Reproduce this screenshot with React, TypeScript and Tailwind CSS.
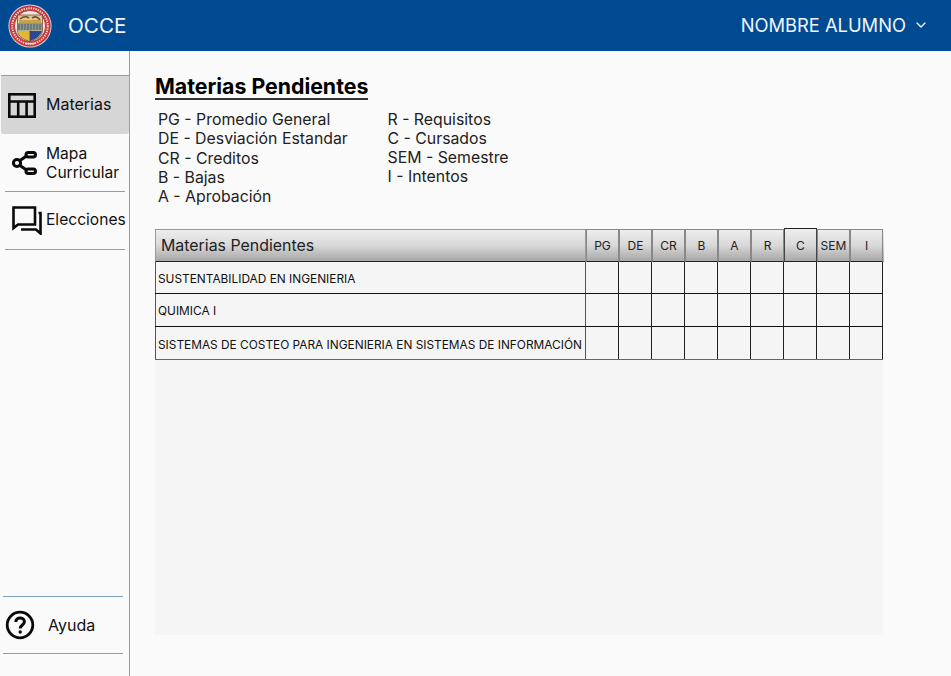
import { ChevronDown } from "lucide-react";

const font = "font-['Inter','Liberation_Sans',sans-serif]";
const columns = ["PG", "DE", "CR", "B", "A", "R", "C", "SEM", "I"];
const subjects = [
  { name: "SUSTENTABILIDAD EN INGENIERIA", row: "h-[32px] border-b border-[#111]", cell: "pt-[4px]" },
  { name: "QUIMICA I", row: "h-[33px] border-b border-[#111]", cell: "pt-[4px]" },
  { name: "SISTEMAS DE COSTEO PARA INGENIERIA EN SISTEMAS DE INFORMACIÓN", row: "h-[33px] border-b border-[#666]", cell: "pt-[5px]" },
];
const legendLeft = [
  "PG - Promedio General",
  "DE - Desviación Estandar",
  "CR - Creditos",
  "B - Bajas",
  "A - Aprobación",
];
const legendRight = ["R - Requisitos", "C - Cursados", "SEM - Semestre", "I - Intentos"];

function Logo() {
  return (
    <svg width="44" height="44" viewBox="0 0 44 44">
      <circle cx="22" cy="22" r="21.6" fill="#d9d3cf" />
      <circle cx="22" cy="22" r="20.6" fill="#c8323a" />
      <circle cx="22" cy="22" r="17.8" fill="none" stroke="#f4dcd0" strokeWidth="2" strokeDasharray="1.4 1" />
      <circle cx="22" cy="22" r="15.6" fill="#efe6d4" stroke="#a83a3e" strokeWidth="0.8" />
      <path d="M9.5 11 H34.5 V27 Q34 34 22 37.5 Q10 34 9.5 27 Z" fill="#dcc998" stroke="#6d3a30" strokeWidth="0.7" />
      <path d="M12 15 Q17 11 21 14 M24 14 Q29 11 32 16" fill="none" stroke="#7a4a2c" strokeWidth="1.6" />
      <rect x="11" y="16" width="22" height="3" fill="#c7a24a" />
      <rect x="10" y="19" width="24" height="7.5" fill="#8d9a94" />
      <path d="M10 21 H34 M10 23 H34 M10 25 H34" stroke="#38434c" strokeWidth="0.7" strokeDasharray="2 1" />
      <path d="M10 27 H22 V37 Q12 34 10 27 Z" fill="#e2b72f" />
      <path d="M22 27 H34 Q32 34 22 37 Z" fill="#2a4a96" />
      <path d="M22 26.5 V37.5" stroke="#5a2a2a" strokeWidth="0.7" />
      <path d="M17 39.6 H27" stroke="#f4dcd0" strokeWidth="1.4" />
    </svg>
  );
}

function TableIcon() {
  return (
    <svg className="shrink-0" width="28" height="25" viewBox="0 0 28 25" fill="none" stroke="#0a0a0a" strokeWidth="2.6">
      <rect x="1.3" y="1.3" width="25.4" height="22.4" />
      <path d="M1.3 8.5 H26.7 M10.2 8.5 V23.7 M18.6 8.5 V23.7" />
    </svg>
  );
}

function MapIcon() {
  return (
    <svg className="shrink-0" width="25" height="24" viewBox="0 0 25 24" fill="none" stroke="#0a0a0a" strokeWidth="3">
      <circle cx="5" cy="12" r="3.6" />
      <rect x="14" y="1.5" width="9.5" height="4.6" rx="2.3" />
      <rect x="14" y="17.9" width="9.5" height="4.6" rx="2.3" />
      <path d="M8 9.5 L14.5 5 M8 14.5 L14.5 19" />
    </svg>
  );
}

function ChatIcon() {
  return (
    <svg className="shrink-0" width="30" height="29" viewBox="0 0 30 29" fill="none" stroke="#0a0a0a" strokeWidth="2.6">
      <path d="M1.5 1.5 H23 V18.5 H6 L1.5 22 Z" />
      <path d="M26.5 7 H28.5 V27.5 L24 23.5 H9" />
    </svg>
  );
}

function HelpIcon() {
  return (
    <svg className="shrink-0" width="30" height="30" viewBox="0 0 30 30" fill="none" stroke="#0a0a0a" strokeWidth="2.8">
      <circle cx="15" cy="15" r="12.8" />
      <path d="M10.8 12 C10.8 6.6 19.4 6.8 19.4 11.8 C19.4 15 15.2 15 15.2 18.4" strokeWidth="3" />
      <circle cx="15.2" cy="22" r="1.7" fill="#0a0a0a" stroke="none" />
    </svg>
  );
}

export default function App() {
  return (
    <div className={`${font} flex h-[676px] w-[951px] flex-col overflow-hidden bg-[#fafafa] text-[#111]`}>
      {/* Header */}
      <header className="flex h-[51px] shrink-0 items-center justify-between bg-[#004a92] pl-[8px] pr-[22px] text-[#eef5fb]">
        <div className="flex items-center gap-[16px]">
          <Logo />
          <span className="text-[20.7px]">OCCE</span>
        </div>
        <div className="flex items-center gap-[7px]">
          <span className="text-[18.33px]">NOMBRE ALUMNO</span>
          <ChevronDown className="size-[16px]" strokeWidth={2} />
        </div>
      </header>

      <div className="flex min-h-0 flex-1">
        {/* Sidebar */}
        <aside className="flex w-[130px] shrink-0 flex-col border-r border-[#7fa3c0] pt-[24px] pb-[21px] pl-[1px] text-[16px]">
          <div className="flex h-[59px] items-center gap-[10px] rounded-b-[3px] border-t border-[#7fa3c0] bg-[#d6d6d6] pl-[7px]">
            <TableIcon />
            <span className="mb-[2px]">Materias</span>
          </div>
          <div className="mx-[4px] flex h-[58px] items-center gap-[9px] border-b border-[#7fa3c0] pl-[7px]">
            <MapIcon />
            <span className="text-[15.6px] leading-[19px]">Mapa<br />Curricular</span>
          </div>
          <div className="mx-[4px] flex h-[58px] items-center gap-[4px] border-b border-[#7fa3c0] pl-[7px]">
            <ChatIcon />
            <span className="mb-[2px] text-[15.6px] whitespace-nowrap">Elecciones</span>
          </div>
          <div className="mt-auto mb-[1px] mr-[6px] ml-[2px] flex h-[58px] items-center gap-[13px] border-y border-[#7fa3c0] pl-[2px]">
            <HelpIcon />
            <span>Ayuda</span>
          </div>
        </aside>

        {/* Content */}
        <main className="min-w-0 flex-1 pt-[23px] pl-[25px]">
          <h1 className="w-fit border-b-2 border-[#333] text-[21.3px] leading-[24px] font-bold text-black">Materias Pendientes</h1>
          <div className="mt-[10px] flex pl-[3px] text-[15.84px] text-[#222]">
            <ul className="w-[229.5px] leading-[19.25px]">
              {legendLeft.map((item) => (
                <li key={item}>{item}</li>
              ))}
            </ul>
            <ul className="leading-[19px]">
              {legendRight.map((item) => (
                <li key={item}>{item}</li>
              ))}
            </ul>
          </div>

          {/* Table */}
          <div className="mt-[23px] h-[406px] w-[728px] bg-[#f5f5f5]">
            <div className="flex h-[33px] w-[729px] bg-gradient-to-b from-[#efefef] via-[#d8d8d8] to-[#a4a4a4] text-[#222]">
              <div className="flex w-[431px] items-center border border-b-[#222] border-[#999] pl-[5px] text-[15.9px]">Materias Pendientes</div>
              {columns.map((col) => (
                <div
                  key={col}
                  className={`flex w-[33px] items-center justify-center border border-b-[#222] pt-[1px] text-[12px] ${col === "C" ? "-mt-[1px] border-t-[#222] border-x-[#444]" : "border-[#888]"}`}
                >
                  {col}
                </div>
              ))}
            </div>
            {subjects.map((subject) => (
              <div key={subject.name} className={`flex ${subject.row}`}>
                <div className={`flex w-[431px] items-center border-x border-x-[#555] pl-[2px] text-[11.87px] whitespace-nowrap ${subject.cell}`}>{subject.name}</div>
                {columns.map((col) => (
                  <div key={col} className="w-[33px] border-r border-[#222]" />
                ))}
              </div>
            ))}
          </div>
        </main>
      </div>
    </div>
  );
}
